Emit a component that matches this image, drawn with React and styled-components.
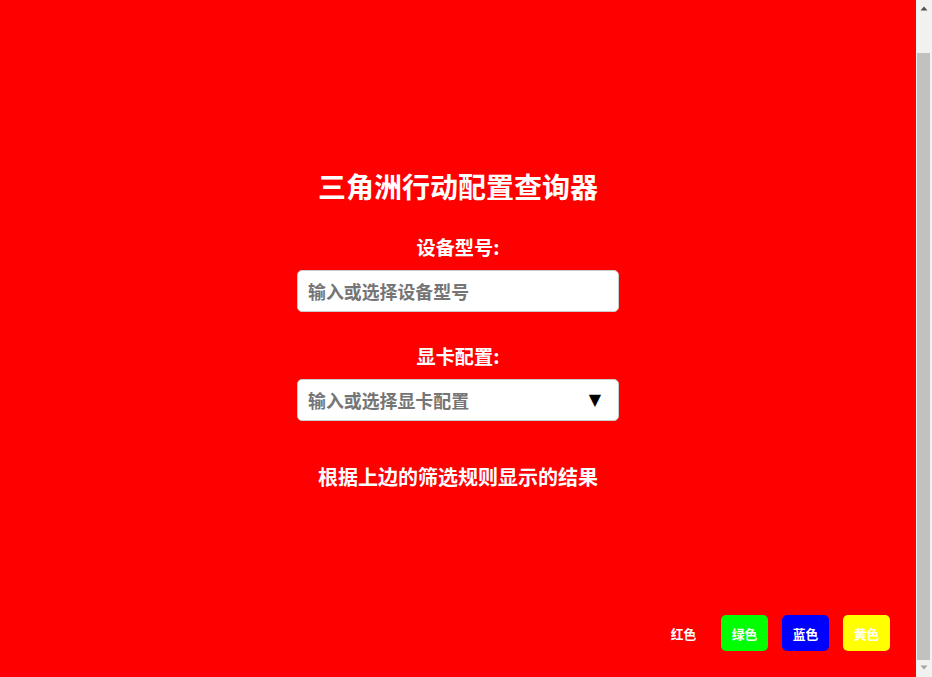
import React from "react";
import styled, { createGlobalStyle } from "styled-components";

const GlobalStyle = createGlobalStyle`
  html, body {
    margin: 0;
    padding: 0;
    background: #ff0000;
    overflow: hidden;
  }
  body {
    font-family: "Noto Sans CJK SC", "Noto Sans", sans-serif;
    color: #ffffff;
  }
  * { box-sizing: border-box; }
`;

const Page = styled.div`
  display: flex;
  height: 100vh;
  background: #ff0000;
`;

const Content = styled.div`
  position: relative;
  flex: 1;
  min-width: 0;
`;

const Main = styled.main`
  display: flex;
  flex-direction: column;
  align-items: center;
  padding-top: 166px;
`;

const Title = styled.h1`
  margin: 0 0 29px;
  font-size: 28px;
  line-height: 40px;
  font-weight: 700;
  color: #fff;
`;

const Field = styled.div`
  display: flex;
  flex-direction: column;
  align-items: center;
  width: 322px;
  margin-top: ${(p) => p.$top || 0}px;
`;

const Label = styled.label`
  display: block;
  font-size: 19.2px;
  line-height: 24px;
  font-weight: 700;
  color: #fff;
  margin-bottom: 11px;
`;

const InputWrap = styled.div`
  position: relative;
  width: 100%;
`;

const Input = styled.input`
  display: block;
  width: 100%;
  height: 42px;
  padding: 0 10px;
  border: 1px solid #cccccc;
  border-radius: 5px;
  background: #fff;
  font-family: "Noto Sans CJK SC", "Noto Sans", sans-serif;
  font-size: 17.9px;
  font-weight: 700;
  color: #333;
  outline: none;
  &::placeholder {
    color: #757575;
    opacity: 1;
  }
`;

const Arrow = styled.span`
  position: absolute;
  right: 18px;
  top: 50%;
  transform: translateY(-50%);
  font-size: 16px;
  line-height: 1;
  color: #000;
  pointer-events: none;
  font-family: "DejaVu Sans", sans-serif;
`;

const Result = styled.div`
  margin-top: 42px;
  font-size: 20px;
  line-height: 28px;
  font-weight: 700;
  color: #fff;
`;

const ColorBar = styled.div`
  position: absolute;
  right: 26px;
  bottom: 26px;
  display: flex;
  gap: 14px;
`;

const ColorButton = styled.button`
  width: 47px;
  height: 36px;
  padding: 0;
  border: none;
  border-radius: 5px;
  background: ${(p) => p.$bg};
  color: #fff;
  font-family: "Noto Sans CJK SC", "Noto Sans", sans-serif;
  font-size: 12.8px;
  font-weight: 700;
  cursor: pointer;
`;

const ScrollRail = styled.div`
  display: flex;
  flex-direction: column;
  width: 16px;
  flex-shrink: 0;
  height: 100vh;
  background: #f1f1f1;
`;

const ScrollButton = styled.div`
  height: 17px;
  flex-shrink: 0;
  display: flex;
  align-items: center;
  justify-content: center;
`;

const ScrollThumb = styled.div`
  flex: 1;
  margin: 36px 2px 0 1px;
  background: #c1c1c1;
`;

const colors = [
  { name: "红色", bg: "#ff0000" },
  { name: "绿色", bg: "#00ff00" },
  { name: "蓝色", bg: "#0000ff" },
  { name: "黄色", bg: "#ffff00" },
];

export default function App() {
  return (
    <Page>
      <GlobalStyle />
      <Content>
        <Main>
          <Title>三角洲行动配置查询器</Title>
          <Field>
            <Label>设备型号:</Label>
            <InputWrap>
              <Input placeholder="输入或选择设备型号" />
            </InputWrap>
          </Field>
          <Field $top={32}>
            <Label>显卡配置:</Label>
            <InputWrap>
              <Input placeholder="输入或选择显卡配置" />
              <Arrow>▼</Arrow>
            </InputWrap>
          </Field>
          <Result>根据上边的筛选规则显示的结果</Result>
        </Main>
        <ColorBar>
          {colors.map((c) => (
            <ColorButton key={c.name} $bg={c.bg}>
              {c.name}
            </ColorButton>
          ))}
        </ColorBar>
      </Content>
      <ScrollRail>
        <ScrollButton>
          <svg width="16" height="17" viewBox="0 0 16 17">
            <path d="M4.5 10.5h7L8 6.5z" fill="#505050" />
          </svg>
        </ScrollButton>
        <ScrollThumb />
        <ScrollButton>
          <svg width="16" height="17" viewBox="0 0 16 17">
            <path d="M4.5 5.5h7L8 9.5z" fill="#a3a3a3" />
          </svg>
        </ScrollButton>
      </ScrollRail>
    </Page>
  );
}
